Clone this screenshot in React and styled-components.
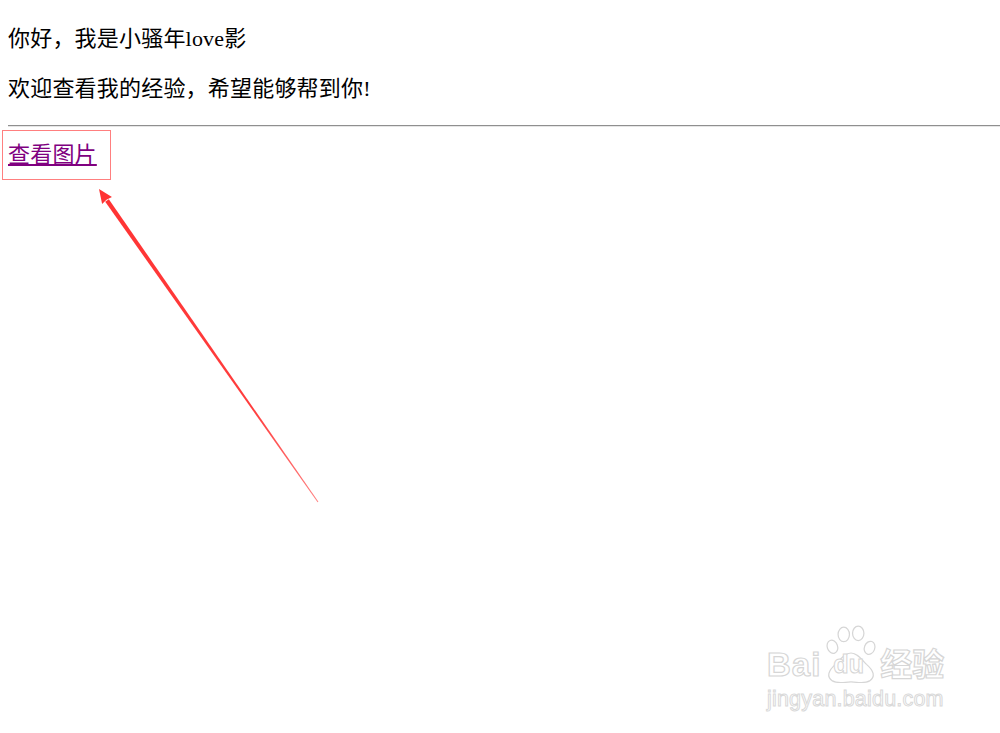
import React from "react";
import styled, { createGlobalStyle } from "styled-components";

const Global = createGlobalStyle`
  html, body { margin: 0; padding: 0; background: #fff; }
  body { width: 1000px; height: 733px; overflow: hidden; }
`;

const Page = styled.div`
  position: relative;
  width: 1000px;
  height: 733px;
  box-sizing: border-box;
  padding: 3px 0 0 8px;
  font-family: "Liberation Serif", "Noto Sans CJK SC", serif;
  color: #000;
`;

const Para = styled.p`
  margin: 22px 0;
  font-size: 22px;
  line-height: 28px;
  letter-spacing: 0.2px;
`;

const Rule = styled.hr`
  margin: 22px 0 0 0;
  border: 0;
  border-top: 1px solid #8f8f8f;
  border-bottom: 1px solid #e6e6e6;
  height: 0;
`;

const LinkRow = styled.div`
  margin-top: 14px;
  font-size: 22px;
  line-height: 28px;
  letter-spacing: 0.2px;
`;

const Link = styled.a`
  color: #800080;
  text-decoration: underline;
  text-underline-offset: 2px;
`;

const Highlight = styled.div`
  position: absolute;
  left: 2px;
  top: 130px;
  width: 107px;
  height: 48px;
  border: 1px solid #ff7f7f;
  pointer-events: none;
`;

const Overlay = styled.svg`
  position: absolute;
  left: 0;
  top: 0;
  pointer-events: none;
`;

const Watermark = styled.div`
  position: absolute;
  left: 767px;
  top: 622px;
  display: flex;
  flex-direction: column;
  align-items: flex-start;
  pointer-events: none;
`;

const LogoRow = styled.div`
  display: flex;
  align-items: flex-end;
  height: 62px;
`;

const LogoText = styled.span`
  font-family: "Liberation Sans", Arial, "Noto Sans CJK SC", sans-serif;
  font-weight: 700;
  font-size: ${(p) => p.$size}px;
  line-height: 1;
  color: #fff;
  -webkit-text-stroke: 1.2px #d6d6d6;
  letter-spacing: ${(p) => p.$spacing || 0}px;
  margin-bottom: ${(p) => p.$drop || 0}px;
`;

const PawWrap = styled.div`
  position: relative;
  width: 54px;
  height: 62px;
  margin: 0 2px 0 3px;
`;

const PawText = styled.span`
  position: absolute;
  left: 9px;
  bottom: 7px;
  font-family: "Liberation Sans", Arial, sans-serif;
  font-weight: 700;
  font-size: 25px;
  line-height: 1;
  color: #fff;
  -webkit-text-stroke: 1px #d6d6d6;
`;

const Domain = styled.span`
  margin-top: 3px;
  font-family: "Liberation Sans", Arial, sans-serif;
  font-size: 21.5px;
  line-height: 24px;
  color: #fff;
  -webkit-text-stroke: 1px #d9d9d9;
  letter-spacing: 0.2px;
`;

function Arrow() {
  const tip = [99, 189];
  const tail = [318, 502];
  const dx = tail[0] - tip[0];
  const dy = tail[1] - tip[1];
  const len = Math.hypot(dx, dy);
  const ux = dx / len;
  const uy = dy / len;
  const px = -uy;
  const py = ux;
  const headLen = 14;
  const headW = 6;
  const base = [tip[0] + ux * headLen, tip[1] + uy * headLen];
  const shaftW0 = 2.2;
  const shaftW1 = 0.5;
  const pts = [
    [base[0] + px * shaftW0, base[1] + py * shaftW0],
    [tail[0] + px * shaftW1, tail[1] + py * shaftW1],
    [tail[0] - px * shaftW1, tail[1] - py * shaftW1],
    [base[0] - px * shaftW0, base[1] - py * shaftW0],
  ];
  const head = [
    tip,
    [base[0] + px * headW, base[1] + py * headW],
    [base[0] - ux, base[1] - uy],
    [base[0] - px * headW, base[1] - py * headW],
  ];
  const f = (a) => a.map((p) => p.join(",")).join(" ");
  return (
    <Overlay width="1000" height="733" viewBox="0 0 1000 733">
      <defs>
        <linearGradient id="fade" x1={tip[0]} y1={tip[1]} x2={tail[0]} y2={tail[1]} gradientUnits="userSpaceOnUse">
          <stop offset="0" stopColor="#ff3333" />
          <stop offset="0.7" stopColor="#ff3d3d" />
          <stop offset="1" stopColor="#ff8080" />
        </linearGradient>
      </defs>
      <polygon points={f(pts)} fill="url(#fade)" />
      <polygon points={f(head)} fill="#ff3333" />
    </Overlay>
  );
}

function Paw() {
  return (
    <PawWrap>
      <svg width="54" height="62" viewBox="0 0 52 60" style={{ position: "absolute", left: 0, top: 0 }}>
        <g fill="#fff" stroke="#d6d6d6" strokeWidth="1.2">
          <ellipse cx="8" cy="24" rx="5" ry="6.5" transform="rotate(-20 8 24)" />
          <ellipse cx="19" cy="12" rx="5.5" ry="7" />
          <ellipse cx="33" cy="11" rx="5.5" ry="7" />
          <ellipse cx="44" cy="25" rx="5" ry="6.5" transform="rotate(20 44 25)" />
          <path d="M26 30 C 20 30, 16 36, 11 41 C 4 47, 2 53, 8 57 C 13 60, 20 58, 26 58 C 32 58, 39 60, 44 57 C 50 53, 48 47, 41 41 C 36 36, 32 30, 26 30 Z" />
        </g>
      </svg>
      <PawText>du</PawText>
    </PawWrap>
  );
}

export default function App() {
  return (
    <>
      <Global />
      <Page>
        <Para>你好，我是小骚年love影</Para>
        <Para>欢迎查看我的经验，希望能够帮到你!</Para>
        <Rule />
        <LinkRow>
          <Link href="#">查看图片</Link>
        </LinkRow>
        <Highlight />
        <Arrow />
        <Watermark>
          <LogoRow>
            <LogoText $size={33} $spacing={1} $drop={3}>Bai</LogoText>
            <Paw />
            <LogoText $size={32} $drop={3}>经验</LogoText>
          </LogoRow>
          <Domain>jingyan.baidu.com</Domain>
        </Watermark>
      </Page>
    </>
  );
}
